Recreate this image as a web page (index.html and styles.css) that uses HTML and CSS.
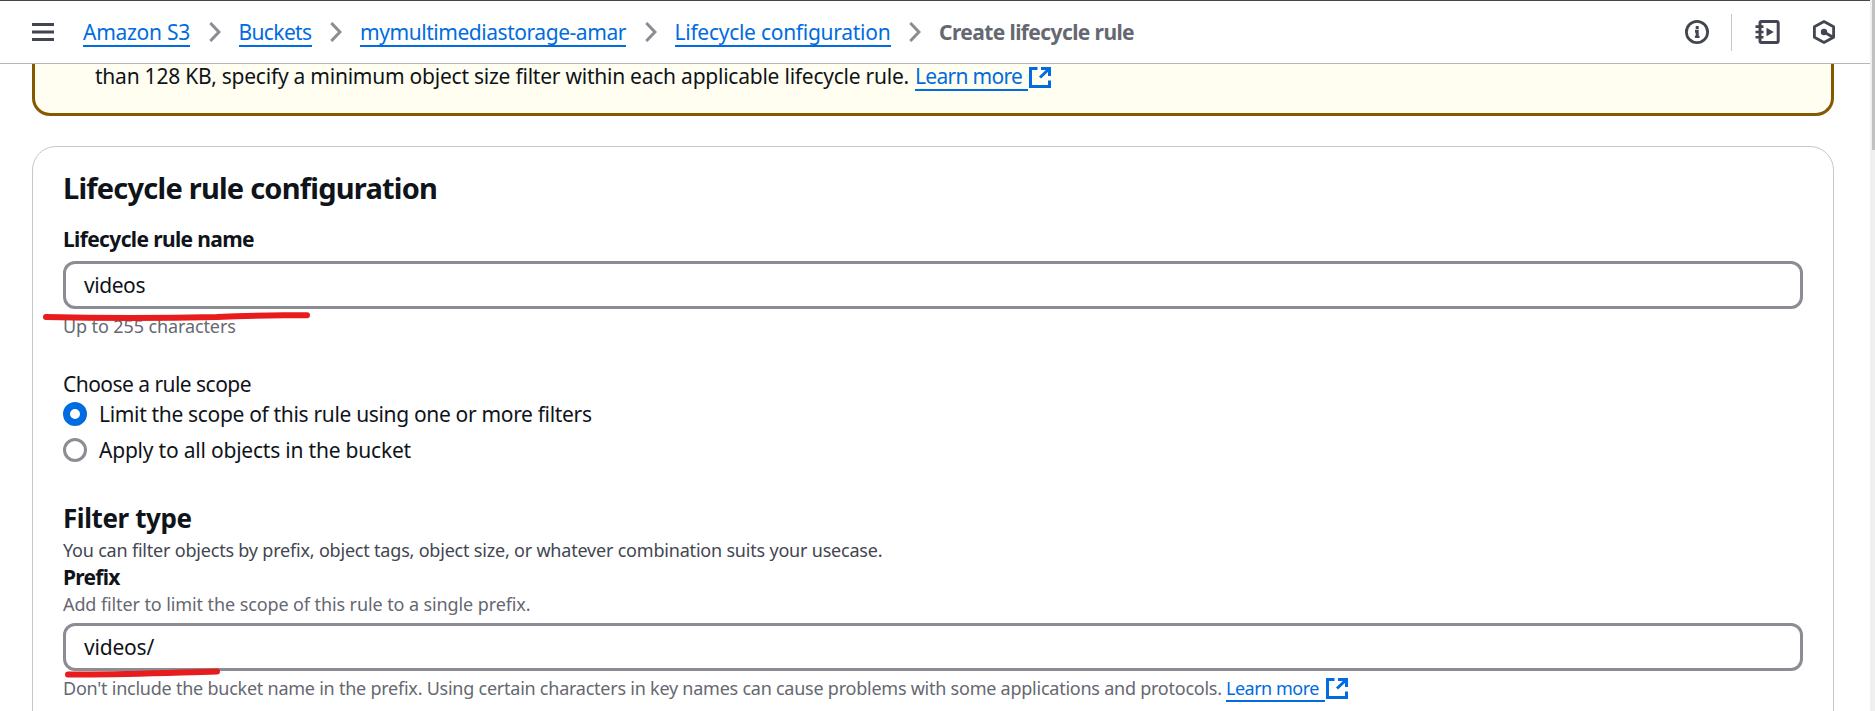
FILE: index.html
```
<!DOCTYPE html>
<html lang="en">
<head>
<meta charset="utf-8">
<title>Create lifecycle rule</title>
<link rel="stylesheet" href="styles.css">
</head>
<body>
<div class="app">
  <div class="view">
    <header class="topbar">
      <svg class="menu-icon" width="22" height="18" viewBox="0 0 22 18"><path d="M0 1.5h22M0 9h22M0 16.5h22"/></svg>
      <nav class="breadcrumbs">
        <a class="crumb crumb-s3">Amazon S3</a>
        <svg class="chevron" width="12" height="20" viewBox="0 0 12 20"><path d="M1.3 1l8.6 9-8.6 9"/></svg>
        <a class="crumb crumb-buckets">Buckets</a>
        <svg class="chevron" width="12" height="20" viewBox="0 0 12 20"><path d="M1.3 1l8.6 9-8.6 9"/></svg>
        <a class="crumb crumb-name">mymultimediastorage-amar</a>
        <svg class="chevron" width="12" height="20" viewBox="0 0 12 20"><path d="M1.3 1l8.6 9-8.6 9"/></svg>
        <a class="crumb crumb-config">Lifecycle configuration</a>
        <svg class="chevron" width="12" height="20" viewBox="0 0 12 20"><path d="M1.3 1l8.6 9-8.6 9"/></svg>
        <span class="crumb-current">Create lifecycle rule</span>
      </nav>
      <div class="tools">
        <svg class="tool" width="24" height="24" viewBox="0 0 24 24"><circle cx="12" cy="12" r="10.6"/><path d="M12.2 18v-6.7H10M12.2 6v3" stroke-width="3"/><path d="M9.8 16.8h4.8" stroke-width="2"/></svg>
        <span class="divider"></span>
        <svg class="tool" width="25" height="24" viewBox="0 0 25 24"><rect x="5" y="1.5" width="18.2" height="21" rx="1.5" stroke-width="3"/><path d="M.5 6.6h8M.5 12h8M.5 17.2h8" stroke-width="2.6"/><path class="solid" d="M11.5 7.8v8.4l7.3-4.2z"/></svg>
        <svg class="tool" width="22" height="24" viewBox="0 0 22 24"><path d="M11 1.6l9.6 5.1v10.6L11 22.4 1.4 17.300V6.700z" stroke-linejoin="round"/><circle class="solid" cx="11" cy="12" r="3.2"/><path d="M11 12l9 5.200"/></svg>
      </div>
    </header>

    <main class="content">
      <section class="warning">
        <p class="warning-text"><span class="warning-copy">than 128 KB, specify a minimum object size filter within each applicable lifecycle rule.</span><a class="learn">Learn more</a><svg class="external" width="22" height="21" viewBox="0 0 22 21"><path d="M8.500 1.500h-7v18h19v-6M12 1.500h8.500v7.500M20.500 1.500l-9.500 9"/></svg></p>
      </section>

      <section class="card">
        <h2 class="title">Lifecycle rule configuration</h2>
        <label class="label label-name">Lifecycle rule name</label>
        <div class="input">
          <span class="value">videos</span>
          <svg class="stroke stroke-name" width="270" height="14" viewBox="0 0 270 14"><path d="M4 7C70 8.500 130 8 175 7C215 5 225 5.500 265 5.200"/></svg>
        </div>
        <p class="hint hint-limit">Up to 255 characters</p>

        <p class="scope">Choose a rule scope</p>
        <div class="option"><span class="radio radio-on"></span><span class="option-limit">Limit the scope of this rule using one or more filters</span></div>
        <div class="option option-second"><span class="radio"></span><span class="option-all">Apply to all objects in the bucket</span></div>

        <h3 class="subtitle">Filter type</h3>
        <p class="description">You can filter objects by prefix, object tags, object size, or whatever combination suits your usecase.</p>
        <label class="label label-prefix">Prefix</label>
        <p class="hint hint-add">Add filter to limit the scope of this rule to a single prefix.</p>
        <div class="input input-prefix">
          <span class="value value-prefix">videos/</span>
          <svg class="stroke stroke-prefix" width="160" height="12" viewBox="0 0 160 12"><path d="M4 8.500C60 9 100 7 153 5.500"/></svg>
        </div>
        <p class="hint hint-chars"><span class="chars-copy">Don't include the bucket name in the prefix. Using certain characters in key names can cause problems with some applications and protocols.</span><a class="learn learn-small">Learn more</a><svg class="external external-small" width="22" height="21" viewBox="0 0 22 21"><path d="M8.500 1.500h-7v18h19v-6M12 1.500h8.500v7.500M20.500 1.500l-9.500 9"/></svg></p>
      </section>
    </main>
  </div>
  <div class="scrollbar"><div class="thumb"></div></div>
</div>
</body>
</html>
```
FILE: styles.css
```
* { box-sizing: border-box; }
body {
  margin: 0;
  font-family: "Noto Sans", "Open Sans", sans-serif;
  font-size: 21px;
  line-height: 30px;
  color: #0f141a;
  background: #fff;
}
h2, h3, p { margin: 0; }
.app { display: flex; height: 711px; overflow: hidden; }
.view { flex: 1; min-width: 0; }

/* Top navigation */
.topbar {
  display: flex;
  align-items: center;
  height: 64px;
  padding: 0 35px 0 32px;
  border-top: 1px solid #424650;
  border-bottom: 1px solid #b4b4bb;
}
.menu-icon { stroke: #424650; stroke-width: 3; margin-right: 29px; }
.breadcrumbs { display: flex; align-items: center; flex: 1; white-space: nowrap; }
.crumb {
  color: #006ce0;
  height: 30px;
  line-height: 30px;
  border-bottom: 2px solid #006ce0;
}
.crumb, .crumb-current { flex: none; }
.crumb-s3 { width: 107px; letter-spacing: -0.27px; }
.crumb-buckets { width: 73px; letter-spacing: -0.63px; }
.crumb-name { width: 266px; letter-spacing: -0.45px; }
.crumb-config { width: 216px; letter-spacing: -0.27px; }
.crumb-current { color: #656871; font-weight: 700; letter-spacing: -0.6px; }
.chevron { flex: none; margin: 0 18px 0 18.500px; fill: none; stroke: #8c8c94; stroke-width: 3; }
.tools { display: flex; align-items: center; }
.tool { fill: none; stroke: #424650; stroke-width: 2.8; }
.tool + .tool { margin-left: 33px; }
.tool .solid { fill: #424650; stroke: none; }
.divider { width: 1px; height: 37px; margin: 0 23px 0 22px; background: #c6c6cd; }

/* Page content */
.content { padding: 0 36px 0 32px; }
.warning {
  display: flex;
  height: 52px;
  padding-left: 60px;
  border: 3px solid #855900;
  border-top: 0;
  border-radius: 0 0 18px 18px;
  background: #fffef0;
}
.warning-text { display: flex; white-space: nowrap; margin-top: -3px; }
.warning-copy { width: 820px; letter-spacing: -0.235px; }
.learn {
  width: 113px;
  height: 30px;
  color: #006ce0;
  border-bottom: 2px solid #006ce0;
  letter-spacing: -0.7px;
}
.external { margin: 6px 0 0 1px; fill: none; stroke: #006ce0; stroke-width: 3; }

.card {
  height: 620px;
  margin-top: 30px;
  padding: 23px 30px 0;
  border: 1px solid #c6c6cd;
  border-radius: 24px;
}
.title { font-size: 29px; line-height: 36px; letter-spacing: -0.77px; }
.label { display: block; font-weight: 700; }
.label-name { margin-top: 18px; letter-spacing: -0.64px; }
.label-prefix { letter-spacing: -0.75px; }
.input {
  position: relative;
  height: 48px;
  margin-top: 7px;
  padding: 6px 18px;
  border: 3px solid #8c8c94;
  border-radius: 12px;
}
.value { letter-spacing: -0.43px; }
.value-prefix { letter-spacing: -0.2px; }
.stroke { position: absolute; fill: none; stroke: #e81c1c; stroke-width: 6; stroke-linecap: round; }
.stroke-name { left: -24px; top: 46px; }
.stroke-prefix { left: -2px; top: 40px; }

.hint { font-size: 18px; line-height: 24px; color: #656871; }
.hint-limit { margin-top: 5px; letter-spacing: -0.11px; }
.scope { margin-top: 31px; letter-spacing: -0.54px; }
.option { display: flex; align-items: center; gap: 12px; }
.option-second { margin-top: 6px; }
.option-limit { letter-spacing: -0.33px; }
.option-all { letter-spacing: -0.21px; }
.radio { width: 24px; height: 24px; border: 3px solid #8c8c94; border-radius: 50%; }
.radio-on { border: 7px solid #006ce0; }
.subtitle { margin-top: 37px; font-size: 26px; line-height: 33px; letter-spacing: -0.4px; }
.description {
  margin-top: 3px;
  font-size: 18px;
  line-height: 24px;
  color: #424650;
  letter-spacing: -0.2px;
}
.hint-add { letter-spacing: -0.1px; }
.hint-chars { display: flex; margin-top: 5px; white-space: nowrap; }
.chars-copy { width: 1163px; letter-spacing: -0.24px; }
.learn-small { width: 99px; height: 26px; letter-spacing: -0.5px; }
.external-small { margin-top: 2px; }

/* Scroll track */
.scrollbar { width: 5px; padding-left: 2px; background: #f0f0f0; }
.thumb { height: 150px; background: #c1c1c1; }
```
